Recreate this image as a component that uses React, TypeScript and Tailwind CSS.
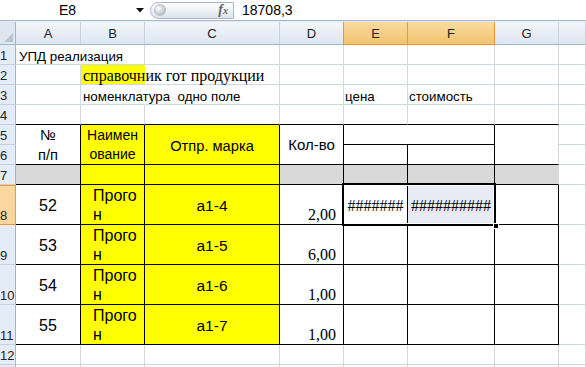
import type { ReactNode } from "react";

const COL = ["", "col-start-1", "col-start-2", "col-start-3", "col-start-4", "col-start-5", "col-start-6", "col-start-7", "col-start-8", "col-start-9"];
const ROW = ["", "row-start-1", "row-start-2", "row-start-3", "row-start-4", "row-start-5", "row-start-6", "row-start-7", "row-start-8", "row-start-9", "row-start-10", "row-start-11", "row-start-12", "row-start-13", "row-start-14"];
const CSPAN = ["", "col-span-1", "col-span-2"];
const RSPAN = ["", "row-span-1", "row-span-2"];

const LETTERS = ["A", "B", "C", "D", "E", "F", "G", ""];
const SELECTED_COLS = [4, 5]; // E, F (0-based in LETTERS)

const times = "font-['Liberation_Serif','Times_New_Roman',serif] text-[16px]";

type Spec = {
  c: number; // grid column (A = 2)
  r: number; // sheet row
  cs?: number;
  rs?: number;
  br?: "black" | "none";
  bb?: "black";
  cls?: string;
  children?: ReactNode;
};

const items = [
  { n: "52", mark: "а1-4", qty: "2,00" },
  { n: "53", mark: "а1-5", qty: "6,00" },
  { n: "54", mark: "а1-6", qty: "1,00" },
  { n: "55", mark: "а1-7", qty: "1,00" },
];

const specs: Spec[] = [
  // row 1
  {
    c: 2, r: 1, br: "none",
    cls: "flex items-end pl-[3px] whitespace-nowrap leading-[15px]",
    children: "УПД реализация",
  },
  // row 2
  {
    c: 3, r: 2, br: "none",
    cls: `flex items-end pl-[2px] whitespace-nowrap leading-[16px] bg-[#ffff00] ${times}`,
    children: "справочник гот продукции",
  },
  // row 3
  {
    c: 3, r: 3, br: "none",
    cls: "flex items-end pl-[2px] whitespace-pre leading-[15px]",
    children: "номенклатура  одно поле",
  },
  { c: 6, r: 3, cls: "flex items-end pl-[1px] leading-[15px]", children: "цена" },
  { c: 7, r: 3, cls: "flex items-end pl-[1px] leading-[15px]", children: "стоимость" },
  // row 4 – top edge of the table
  { c: 2, r: 4, bb: "black" },
  { c: 3, r: 4, bb: "black" },
  { c: 4, r: 4, bb: "black" },
  { c: 5, r: 4, bb: "black" },
  { c: 6, r: 4, bb: "black" },
  { c: 7, r: 4, bb: "black" },
  { c: 8, r: 4, bb: "black" },
  // rows 5-6 header
  {
    c: 2, r: 5, rs: 2, br: "black", bb: "black",
    cls: "flex flex-col items-center justify-center text-[14.67px] leading-[20px]",
    children: (
      <>
        <span>№</span>
        <span>п/п</span>
      </>
    ),
  },
  {
    c: 3, r: 5, rs: 2, br: "black", bb: "black",
    cls: "flex flex-col items-center justify-center text-[14px] leading-[19px] bg-[#ffff00]",
    children: (
      <>
        <span>Наимен</span>
        <span>ование</span>
      </>
    ),
  },
  {
    c: 4, r: 5, rs: 2, br: "black", bb: "black",
    cls: "flex items-center justify-center pt-[2px] text-[14.67px] bg-[#ffff00]",
    children: "Отпр. марка",
  },
  {
    c: 5, r: 5, rs: 2, br: "black", bb: "black",
    cls: "flex items-center justify-center pt-[2px] text-[15px]",
    children: "Кол-во",
  },
  { c: 6, r: 5, cs: 2, br: "black", bb: "black" },
  { c: 8, r: 5, rs: 2, bb: "black" },
  { c: 6, r: 6, br: "black", bb: "black" },
  { c: 7, r: 6, br: "black", bb: "black" },
  // row 7 – grey strip
  { c: 2, r: 7, br: "black", bb: "black", cls: "bg-[#d9d9d9]" },
  { c: 3, r: 7, br: "black", bb: "black", cls: "bg-[#ffff00]" },
  { c: 4, r: 7, br: "black", bb: "black", cls: "bg-[#ffff00]" },
  { c: 5, r: 7, br: "black", bb: "black", cls: "bg-[#d9d9d9]" },
  { c: 6, r: 7, br: "black", bb: "black", cls: "bg-[#d9d9d9]" },
  { c: 7, r: 7, br: "black", bb: "black", cls: "bg-[#d9d9d9]" },
  { c: 8, r: 7, bb: "black", cls: "bg-[#d9d9d9]" },
  // rows 8-11 – data
  ...items.flatMap((it, i): Spec[] => {
    const r = 8 + i;
    return [
      { c: 2, r, br: "black", bb: "black", cls: "flex items-center justify-center pt-[2px] text-[16px]", children: it.n },
      {
        c: 3, r, br: "black", bb: "black",
        cls: "flex flex-col pl-[12px] pt-[1px] text-[16px] leading-[19px] bg-[#ffff00]",
        children: (
          <>
            <span>Прого</span>
            <span>н</span>
          </>
        ),
      },
      { c: 4, r, br: "black", bb: "black", cls: "flex items-center justify-center pt-[2px] text-[15.5px] bg-[#ffff00]", children: it.mark },
      { c: 5, r, br: "black", bb: "black", cls: `flex items-end justify-end pr-[7px] leading-[18px] ${times}`, children: it.qty },
      {
        c: 6, r, br: "black", bb: "black",
        cls: `flex items-center justify-center pt-[3px] ${times}`,
        children: i === 0 ? "#######" : null,
      },
      {
        c: 7, r, br: "black", bb: "black",
        cls: `flex items-center justify-center pt-[3px] ${times} ${i === 0 ? "bg-[#e8ebf4]" : ""}`,
        children: i === 0 ? "##########" : null,
      },
      { c: 8, r, br: "black", bb: "black" },
    ];
  }),
];

function Cell({ s }: { s: Spec }) {
  const right =
    s.br === "black" ? "border-r-black" : s.br === "none" ? "border-r-transparent" : "border-r-[#d0d7e5]";
  const bottom = s.bb === "black" ? "border-b-black" : "border-b-[#d0d7e5]";
  return (
    <div
      className={`${COL[s.c]} ${ROW[s.r + 1]} ${CSPAN[s.cs ?? 1]} ${RSPAN[s.rs ?? 1]} border-r border-b ${right} ${bottom} ${s.cls ?? ""}`}
    >
      {s.children}
    </div>
  );
}

function FormulaBar() {
  return (
    <div className="flex h-[21px] items-center border-b border-[#a9b9cf] bg-white text-[14px] text-black">
      <div className="w-[134px] pl-[1px] text-center">E8</div>
      <svg width="8" height="5" viewBox="0 0 8 5" className="ml-[2px]">
        <path d="M0 0h8L4 4.5z" fill="#111" />
      </svg>
      <div className="ml-[6px] flex h-[17px] w-[84px] items-center justify-between rounded-l-full border border-[#aab8ca] bg-gradient-to-b from-white to-[#dde4ed] pl-[3px] pr-[5px]">
        <span className="h-[12px] w-[12px] rounded-full border border-[#b9c0ca] bg-[radial-gradient(circle_at_35%_35%,#ffffff,#9ea6b2)]" />
        <span className="font-['Liberation_Serif',serif] text-[14px] font-bold italic leading-none text-[#666]">
          f<span className="text-[10px]">x</span>
        </span>
      </div>
      <div className="pl-[8px]">18708,3</div>
    </div>
  );
}

function Sheet() {
  const covered = new Set<string>();
  specs.forEach((s) => {
    for (let dr = 0; dr < (s.rs ?? 1); dr++)
      for (let dc = 0; dc < (s.cs ?? 1); dc++) covered.add(`${s.r + dr}-${s.c + dc}`);
  });

  const blanks: Spec[] = [];
  for (let r = 1; r <= 13; r++)
    for (let c = 2; c <= 9; c++) if (!covered.has(`${r}-${c}`)) blanks.push({ c, r });

  return (
    <div className="grid grid-cols-[16px_65px_64px_135px_64px_64px_87px_64px_1fr] grid-rows-[23px_repeat(7,20px)_repeat(4,40px)_20px_20px] text-[13.33px] text-black">
      {/* corner */}
      <div className="col-start-1 row-start-1 flex items-end justify-end border-r border-b border-[#9eb6ce] bg-[#dfe6f0] p-[2px]">
        <svg width="9" height="9" viewBox="0 0 9 9">
          <path d="M9 0V9H0z" fill="#b7c4d5" />
        </svg>
      </div>

      {/* column headers */}
      {LETTERS.map((l, i) => {
        const sel = SELECTED_COLS.includes(i);
        return (
          <div
            key={i}
            className={`${COL[i + 2]} row-start-1 flex items-center justify-center border-r border-b pt-[1px] text-[13px] text-[#222] ${
              sel
                ? "border-r-[#f29536] border-b-[#f29536] bg-gradient-to-b from-[#f9dba0] to-[#f2c46e]"
                : "border-r-[#c5d2e2] border-b-[#9eb6ce] bg-gradient-to-b from-[#f3f6fb] to-[#dde6f1]"
            } ${i === 3 ? "border-r-[#f29536]" : ""}`}
          >
            {l}
          </div>
        );
      })}

      {/* row headers; row 13 is only a sliver at the bottom edge */}
      {Array.from({ length: 13 }, (_, i) => i + 1).map((n) => (
        <div
          key={n}
          className={`col-start-1 ${ROW[n + 1]} flex items-end border-r border-b pb-[2px] text-[13px] leading-[13px] text-[#222] ${
            n === 8
              ? "border-r-[#f29536] border-b-[#f29536] border-t border-t-[#f29536] bg-[#fcd79d]"
              : "border-r-[#9eb6ce] border-b-[#c5d2e2] bg-[#e4ecf7]"
          }`}
        >
          {n < 13 ? n : null}
        </div>
      ))}

      {blanks.map((s) => (
        <Cell key={`b-${s.r}-${s.c}`} s={s} />
      ))}
      {specs.map((s) => (
        <Cell key={`s-${s.r}-${s.c}`} s={s} />
      ))}

      {/* selection E8:F8 */}
      <div className="pointer-events-none relative col-start-6 col-span-2 row-start-9">
        <div className="absolute -top-[2px] -left-[2px] -right-[1px] -bottom-[1px] border-2 border-black">
          <div className="absolute inset-0 border border-white" />
        </div>
        <div className="absolute -right-[4px] -bottom-[4px] h-[6px] w-[6px] border border-white bg-black" />
      </div>
    </div>
  );
}

export default function App() {
  return (
    <div className="h-[367px] w-[586px] overflow-hidden bg-white font-['Liberation_Sans',Arial,sans-serif]">
      <FormulaBar />
      <div className="h-[1px] bg-[#e3e9f1]" />
      <Sheet />
    </div>
  );
}
